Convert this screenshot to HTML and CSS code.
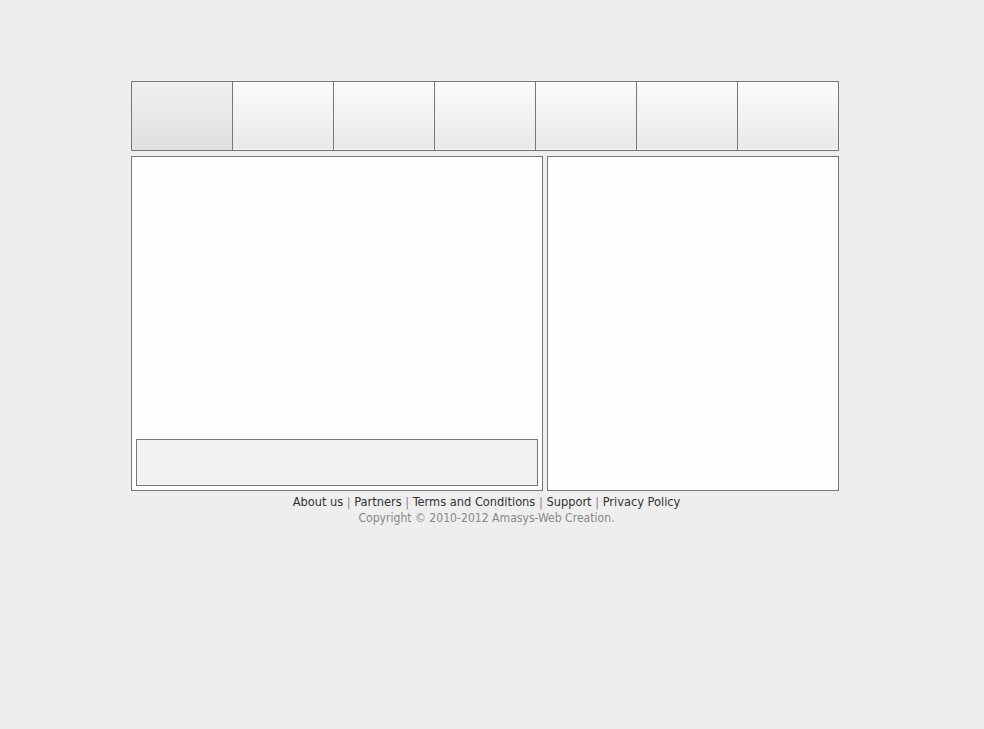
FILE: index.html
```html
<!DOCTYPE html>
<html lang="en">
<head>
    <meta charset="UTF-8">
    <meta name="viewport" content="width=device-width, initial-scale=1.0">
    <title>Amasys-Web Creation</title>
    <link rel="stylesheet" href="styles.css">
</head>
<body>
    <div class="wrapper">
        <ul class="menu">
            <li class="active"></li>
            <li></li>
            <li></li>
            <li></li>
            <li></li>
            <li></li>
            <li></li>
        </ul>
        <div class="main">
            <div class="content">
                <div class="content-body"></div>
                <div class="content-box"></div>
            </div>
            <div class="sidebar"></div>
        </div>
        <div class="footer">
            <p class="links">
                <a href="#">About us</a> <span class="sep">|</span>
                <a href="#">Partners</a> <span class="sep">|</span>
                <a href="#">Terms and Conditions</a> <span class="sep">|</span>
                <a href="#">Support</a> <span class="sep">|</span>
                <a href="#">Privacy Policy</a>
            </p>
            <p class="copy">Copyright &copy; 2010-2012 Amasys-Web Creation.</p>
        </div>
    </div>
</body>
</html>
```
FILE: styles.css
```css
body {
    margin: 0;
    padding-right: 14px;
    background-color: #eeeeee;
    font-family: "DejaVu Sans Condensed", "DejaVu Sans", sans-serif;
}

.wrapper {
    width: 708px;
    margin: 81px auto 0;
}

.menu {
    list-style: none;
    margin: 0;
    padding: 0;
    display: flex;
    height: 68px;
    border: 1px solid #777;
}

.menu li {
    width: 100px;
    border-right: 1px solid #777;
    background: linear-gradient(#fcfcfc, #e8e8e8);
    box-shadow: inset 0 -1px 0 #f6f6f6;
}

.menu li:last-child {
    border-right: none;
}

.menu li.active {
    background: linear-gradient(#f0f0f0, #e0e0e0);
    box-shadow: none;
}

.main {
    display: flex;
    gap: 4px;
    margin-top: 5px;
    height: 335px;
}

.content {
    width: 412px;
    border: 1px solid #777;
    background: #fefefe;
    display: flex;
    flex-direction: column;
    padding: 0 4px 4px;
    box-sizing: border-box;
}

.content-body {
    flex: 1;
}

.content-box {
    height: 45px;
    border: 1px solid #777;
    background: #f2f2f2;
}

.sidebar {
    width: 292px;
    box-sizing: border-box;
    border: 1px solid #777;
    background: #fefefe;
}

.footer {
    text-align: center;
    line-height: 17px;
    padding-top: 2px;
    padding-left: 3px;
}

.footer p {
    margin: 0;
}

.links {
    font-size: 12.7px;
}

.links a {
    color: #333;
    text-decoration: none;
}

.sep {
    color: #9a7a9a;
}

.copy {
    font-size: 12.1px;
    color: #888;
}
```
